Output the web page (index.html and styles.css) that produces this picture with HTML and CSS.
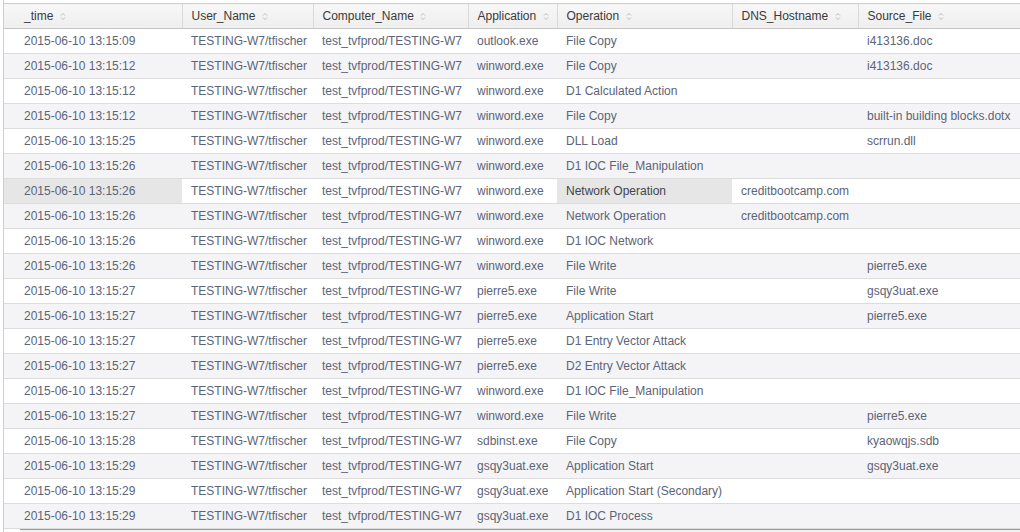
FILE: index.html
```html
<!DOCTYPE html>
<html>
<head>
<meta charset="utf-8">
<link rel="stylesheet" href="styles.css">
</head>
<body>
<div class="frame">
  <table class="results">
    <colgroup>
      <col class="c-time"><col class="c-user"><col class="c-comp"><col class="c-app"><col class="c-op"><col class="c-dns"><col class="c-src">
    </colgroup>
    <thead>
      <tr>
        <th class="first">_time <svg class="sort" viewBox="0 0 6 9"><path d="M1 3.5 L3 1.5 L5 3.5 M1 5.5 L3 7.5 L5 5.5" fill="none" stroke="#bcbcbc" stroke-width="1"/></svg></th>
        <th>User_Name <svg class="sort" viewBox="0 0 6 9"><path d="M1 3.5 L3 1.5 L5 3.5 M1 5.5 L3 7.5 L5 5.5" fill="none" stroke="#bcbcbc" stroke-width="1"/></svg></th>
        <th>Computer_Name <svg class="sort" viewBox="0 0 6 9"><path d="M1 3.5 L3 1.5 L5 3.5 M1 5.5 L3 7.5 L5 5.5" fill="none" stroke="#bcbcbc" stroke-width="1"/></svg></th>
        <th>Application <svg class="sort" viewBox="0 0 6 9"><path d="M1 3.5 L3 1.5 L5 3.5 M1 5.5 L3 7.5 L5 5.5" fill="none" stroke="#bcbcbc" stroke-width="1"/></svg></th>
        <th>Operation <svg class="sort" viewBox="0 0 6 9"><path d="M1 3.5 L3 1.5 L5 3.5 M1 5.5 L3 7.5 L5 5.5" fill="none" stroke="#bcbcbc" stroke-width="1"/></svg></th>
        <th>DNS_Hostname <svg class="sort" viewBox="0 0 6 9"><path d="M1 3.5 L3 1.5 L5 3.5 M1 5.5 L3 7.5 L5 5.5" fill="none" stroke="#bcbcbc" stroke-width="1"/></svg></th>
        <th>Source_File <svg class="sort" viewBox="0 0 6 9"><path d="M1 3.5 L3 1.5 L5 3.5 M1 5.5 L3 7.5 L5 5.5" fill="none" stroke="#bcbcbc" stroke-width="1"/></svg></th>
      </tr>
    </thead>
    <tbody>
      <tr><td class="first">2015-06-10 13:15:09</td><td>TESTING-W7/tfischer</td><td>test_tvfprod/TESTING-W7</td><td>outlook.exe</td><td>File Copy</td><td></td><td>i413136.doc</td></tr>
      <tr><td class="first">2015-06-10 13:15:12</td><td>TESTING-W7/tfischer</td><td>test_tvfprod/TESTING-W7</td><td>winword.exe</td><td>File Copy</td><td></td><td>i413136.doc</td></tr>
      <tr><td class="first">2015-06-10 13:15:12</td><td>TESTING-W7/tfischer</td><td>test_tvfprod/TESTING-W7</td><td>winword.exe</td><td>D1 Calculated Action</td><td></td><td></td></tr>
      <tr><td class="first">2015-06-10 13:15:12</td><td>TESTING-W7/tfischer</td><td>test_tvfprod/TESTING-W7</td><td>winword.exe</td><td>File Copy</td><td></td><td>built-in building blocks.dotx</td></tr>
      <tr><td class="first">2015-06-10 13:15:25</td><td>TESTING-W7/tfischer</td><td>test_tvfprod/TESTING-W7</td><td>winword.exe</td><td>DLL Load</td><td></td><td>scrrun.dll</td></tr>
      <tr><td class="first">2015-06-10 13:15:26</td><td>TESTING-W7/tfischer</td><td>test_tvfprod/TESTING-W7</td><td>winword.exe</td><td>D1 IOC File_Manipulation</td><td></td><td></td></tr>
      <tr><td class="first hl">2015-06-10 13:15:26</td><td>TESTING-W7/tfischer</td><td>test_tvfprod/TESTING-W7</td><td>winword.exe</td><td class="hl dark">Network Operation</td><td>creditbootcamp.com</td><td></td></tr>
      <tr><td class="first">2015-06-10 13:15:26</td><td>TESTING-W7/tfischer</td><td>test_tvfprod/TESTING-W7</td><td>winword.exe</td><td>Network Operation</td><td>creditbootcamp.com</td><td></td></tr>
      <tr><td class="first">2015-06-10 13:15:26</td><td>TESTING-W7/tfischer</td><td>test_tvfprod/TESTING-W7</td><td>winword.exe</td><td>D1 IOC Network</td><td></td><td></td></tr>
      <tr><td class="first">2015-06-10 13:15:26</td><td>TESTING-W7/tfischer</td><td>test_tvfprod/TESTING-W7</td><td>winword.exe</td><td>File Write</td><td></td><td>pierre5.exe</td></tr>
      <tr><td class="first">2015-06-10 13:15:27</td><td>TESTING-W7/tfischer</td><td>test_tvfprod/TESTING-W7</td><td>pierre5.exe</td><td>File Write</td><td></td><td>gsqy3uat.exe</td></tr>
      <tr><td class="first">2015-06-10 13:15:27</td><td>TESTING-W7/tfischer</td><td>test_tvfprod/TESTING-W7</td><td>pierre5.exe</td><td>Application Start</td><td></td><td>pierre5.exe</td></tr>
      <tr><td class="first">2015-06-10 13:15:27</td><td>TESTING-W7/tfischer</td><td>test_tvfprod/TESTING-W7</td><td>pierre5.exe</td><td>D1 Entry Vector Attack</td><td></td><td></td></tr>
      <tr><td class="first">2015-06-10 13:15:27</td><td>TESTING-W7/tfischer</td><td>test_tvfprod/TESTING-W7</td><td>pierre5.exe</td><td>D2 Entry Vector Attack</td><td></td><td></td></tr>
      <tr><td class="first">2015-06-10 13:15:27</td><td>TESTING-W7/tfischer</td><td>test_tvfprod/TESTING-W7</td><td>winword.exe</td><td>D1 IOC File_Manipulation</td><td></td><td></td></tr>
      <tr><td class="first">2015-06-10 13:15:27</td><td>TESTING-W7/tfischer</td><td>test_tvfprod/TESTING-W7</td><td>winword.exe</td><td>File Write</td><td></td><td>pierre5.exe</td></tr>
      <tr><td class="first">2015-06-10 13:15:28</td><td>TESTING-W7/tfischer</td><td>test_tvfprod/TESTING-W7</td><td>sdbinst.exe</td><td>File Copy</td><td></td><td>kyaowqjs.sdb</td></tr>
      <tr><td class="first">2015-06-10 13:15:29</td><td>TESTING-W7/tfischer</td><td>test_tvfprod/TESTING-W7</td><td>gsqy3uat.exe</td><td>Application Start</td><td></td><td>gsqy3uat.exe</td></tr>
      <tr><td class="first">2015-06-10 13:15:29</td><td>TESTING-W7/tfischer</td><td>test_tvfprod/TESTING-W7</td><td>gsqy3uat.exe</td><td>Application Start (Secondary)</td><td></td><td></td></tr>
      <tr><td class="first">2015-06-10 13:15:29</td><td>TESTING-W7/tfischer</td><td>test_tvfprod/TESTING-W7</td><td>gsqy3uat.exe</td><td>D1 IOC Process</td><td></td><td></td></tr>
    </tbody>
  </table>
  <div class="scrollbar"></div>
</div>
</body>
</html>
```

FILE: styles.css
```css
html, body {
  margin: 0;
  padding: 0;
  background: #ffffff;
  overflow: hidden;
}

.frame {
  width: 1040px;
  height: 532px;
  margin-left: 3px;
  padding-top: 3px;
  border-left: 1px solid #cfcfcf;
  box-sizing: border-box;
  font-family: "Liberation Sans", Arial, sans-serif;
  font-size: 12px;
}

.results {
  border-collapse: collapse;
  table-layout: fixed;
  width: 1036px;
}

.c-time { width: 178px; }
.c-user { width: 131px; }
.c-comp { width: 155px; }
.c-app { width: 89px; }
.c-op { width: 175px; }
.c-dns { width: 126px; }
.c-src { width: 182px; }

.results th {
  height: 25px;
  padding: 0 0 0 9px;
  text-align: left;
  font-weight: normal;
  color: #3a3a3a;
  background: linear-gradient(#f7f7f7, #eeeeee);
  border-top: 1px solid #d0d0d0;
  border-bottom: 1px solid #c6c6c6;
  border-left: 1px solid #d9d9d9;
  white-space: nowrap;
  box-sizing: border-box;
}

.results th.first {
  border-left: none;
  padding-left: 20px;
}

.sort {
  width: 6px;
  height: 9px;
  margin-left: 3px;
  vertical-align: -1px;
}

.results td {
  height: 24px;
  padding: 0 0 0 9px;
  color: #5c6477;
  border-bottom: 1px solid #dcdcdc;
  white-space: nowrap;
  overflow: hidden;
}

.results td.first {
  padding-left: 20px;
}

.results tbody tr:nth-child(even) td {
  background: #f4f4f6;
}

.results td.hl {
  background: #e6e6e6;
}

.results td.dark {
  color: #3f4450;
}

.scrollbar {
  margin-left: 16px;
  height: 3px;
  border-top: 1px solid #9a9a9a;
  background: #f0f0f0;
}
```
